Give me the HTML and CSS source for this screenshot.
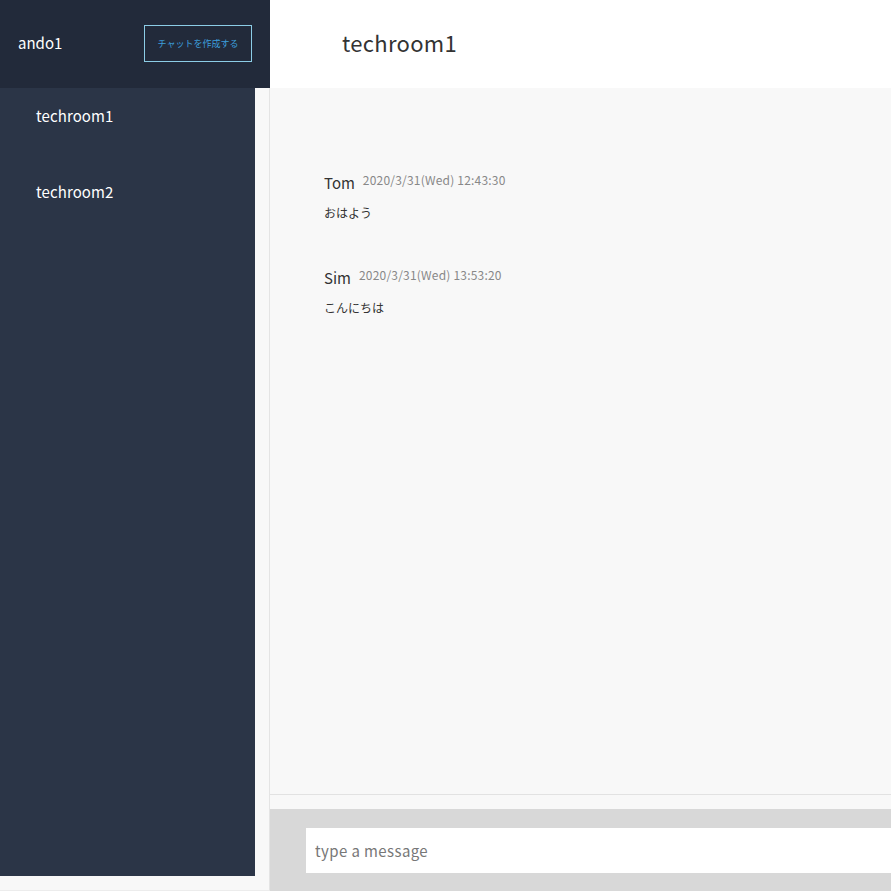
FILE: index.html
```html
<!DOCTYPE html>
<html lang="ja">
<head>
<meta charset="utf-8">
<title>chat</title>
<link rel="stylesheet" href="styles.css">
</head>
<body>
<div class="app">
  <aside class="sidebar">
    <div class="side-header">
      <span class="user">ando1</span>
      <button class="create-btn">チャットを作成する</button>
    </div>
    <div class="side-body">
      <ul class="room-list">
        <li class="room">techroom1</li>
        <li class="room">techroom2</li>
      </ul>
    </div>
  </aside>
  <main class="main">
    <header class="main-header">
      <h1 class="title">techroom1</h1>
    </header>
    <section class="messages">
      <div class="message">
        <div class="meta"><span class="name">Tom</span><span class="date">2020/3/31(Wed) 12:43:30</span></div>
        <p class="text">おはよう</p>
      </div>
      <div class="message">
        <div class="meta"><span class="name">Sim</span><span class="date">2020/3/31(Wed) 13:53:20</span></div>
        <p class="text">こんにちは</p>
      </div>
    </section>
    <div class="spacer"></div>
    <footer class="composer">
      <input class="input" type="text" placeholder="type a message">
    </footer>
  </main>
</div>
</body>
</html>
```
FILE: styles.css
```css
* { box-sizing: border-box; }
html, body { margin: 0; padding: 0; }
body {
  font-family: "Noto Sans CJK JP", "Noto Sans", sans-serif;
  background: #f8f8f8;
  overflow: hidden;
}
.app {
  display: flex;
  width: 891px;
  height: 891px;
}
.sidebar {
  width: 270px;
  flex: none;
  display: flex;
  flex-direction: column;
}
.side-header {
  height: 88px;
  background: #222a3a;
  display: flex;
  align-items: center;
  justify-content: space-between;
  padding: 0 18px 0 18px;
}
.user {
  color: #fff;
  font-size: 15px;
  margin-top: -4px;
}
.create-btn {
  width: 108px;
  height: 37px;
  margin-top: -1px;
  background: transparent;
  border: 1px solid #8ccde6;
  color: #3d9fdc;
  font-family: inherit;
  font-size: 9px;
  padding: 0;
}
.side-body {
  flex: 1;
  background: #f8f8f8;
  border-right: 1px solid #e4e4e4;
  border-bottom: 1px solid #ececec;
  padding: 0 14px 14px 0;
  display: flex;
}
.room-list {
  list-style: none;
  margin: 0;
  padding: 16px 0 0 36px;
  flex: 1;
  background: #2b3547;
}
.room {
  color: #fff;
  font-size: 15px;
  line-height: 24px;
  height: 76px;
  letter-spacing: 0.1px;
}
.main {
  flex: 1;
  display: flex;
  flex-direction: column;
  min-width: 0;
}
.main-header {
  height: 88px;
  background: #fff;
  display: flex;
  align-items: center;
  padding-left: 72px;
  flex: none;
}
.title {
  margin: 0;
  font-weight: 400;
  font-size: 22px;
  color: #333;
  margin-top: -5px;
  letter-spacing: 0.3px;
}
.messages {
  flex: 1;
  background: #f8f8f8;
  border-bottom: 1px solid #e2e2e2;
  padding: 83px 0 0 54px;
}
.message {
  height: 95px;
}
.meta {
  display: flex;
  align-items: flex-start;
  gap: 8px;
}
.name {
  font-size: 15px;
  color: #333;
  line-height: 24px;
}
.date {
  font-size: 12px;
  color: #888;
  line-height: 18px;
  letter-spacing: 0.2px;
}
.text {
  margin: 9px 0 0;
  font-size: 12px;
  color: #333;
  line-height: 18px;
}
.spacer {
  height: 14px;
  background: #f8f8f8;
  flex: none;
}
.composer {
  height: 82px;
  background: #d8d8d8;
  padding: 19px 0 0 36px;
  overflow: hidden;
  flex: none;
}
.input {
  width: 700px;
  height: 45px;
  border: none;
  background: #fff;
  padding: 0 9px;
  font-family: inherit;
  font-size: 15px;
  color: #333;
  outline: none;
  letter-spacing: 0.4px;
}
.input::placeholder { color: #777; }
```
